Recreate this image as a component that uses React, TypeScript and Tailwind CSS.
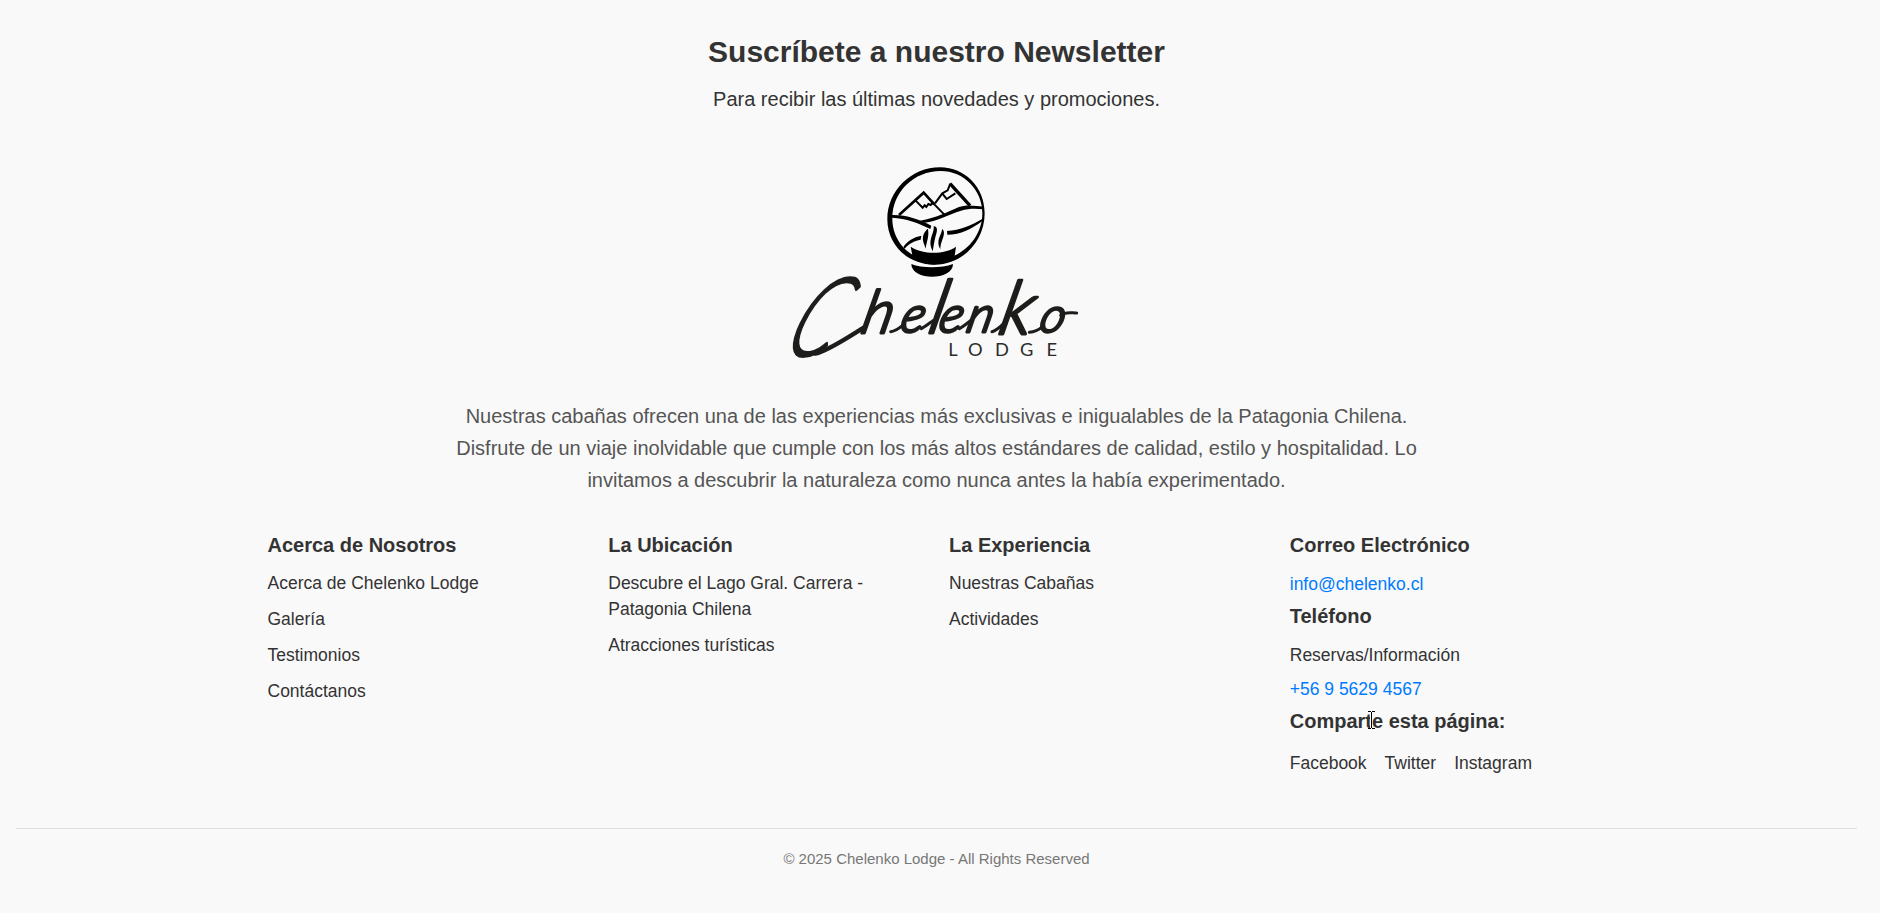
import React from "react";

const linkColumns = [
  {
    title: "Acerca de Nosotros",
    links: ["Acerca de Chelenko Lodge", "Galería", "Testimonios", "Contáctanos"],
  },
  {
    title: "La Ubicación",
    links: ["Descubre el Lago Gral. Carrera - Patagonia Chilena", "Atracciones turísticas"],
  },
  { title: "La Experiencia", links: ["Nuestras Cabañas", "Actividades"] },
];

const socials = ["Facebook", "Twitter", "Instagram"];

function Emblem() {
  return (
    <g>
      <path
        fillRule="evenodd"
        d="M480 52C555 52 614 112 614 190C614 274 548 344 464 344C384 344 322 286 322 208C322 122 394 52 480 52ZM482 63C402 63 337 125 337 206C337 276 392 331 461 331C540 331 607 268 607 190C607 120 552 63 482 63Z"
      />
      <g fill="none" stroke="#000" strokeLinejoin="miter">
        <path strokeWidth="8" d="M357 195L431 128L463 163" />
        <path strokeWidth="6" d="M458 158L493 194" />
        <path strokeWidth="6" d="M407 152L428 173L434 166L439 171L445 162L452 165L461 156" />
        <path strokeWidth="6" d="M465 160L487 130L503 121L511 101" />
        <path strokeWidth="10" d="M510 101L540 134L570 167" />
        <path strokeWidth="6" d="M487 131L500 147L526 130" />
      </g>
      <path d="M336 195C380 194 420 209 454 227L451 237C416 219 378 205 336 203Z" />
      <path d="M420 212C470 204 500 187 535 172C560 162 585 168 610 170L610 178C585 175 565 176 543 182C505 193 475 213 433 218Z" />
      <path d="M501 243C540 241 576 225 608 206L608 212C576 236 542 254 502 254Z" />
      <path d="M370 291C382 272 400 262 424 257L422 269C402 273 386 281 374 296Z" />
      <path d="M442 237C420 260 430 275 437 296C440 272 448 262 444 237Z" />
      <path d="M461 229C476 229 471 247 466 262C462 277 461 290 458 304C448 283 451 270 456 255C460 244 462 237 461 229Z" />
      <path d="M486 237C497 244 490 262 486 272C482 282 481 290 481 298C472 281 475 268 480 257C484 248 486 243 486 237Z" />
      <path d="M392 290C430 314 493 314 528 290L524 318C490 351 430 351 398 321Z" />
      <path d="M394 342C425 355 485 355 519 342C519 393 394 393 394 342Z" />
    </g>
  );
}

function Logo() {
  return (
    <svg
      className="block h-[220px] w-[313px] overflow-visible"
      viewBox="0 0 939 660"
      role="img"
      aria-label="Chelenko Lodge"
    >
      <Emblem />
      <g
        fill="#1d1d1b"
        stroke="#1d1d1b"
        strokeLinejoin="round"
        fontFamily="Lato, 'Liberation Sans', sans-serif"
        fontStyle="italic"
        fontWeight="300"
      >
        <g transform="translate(34 548) skewX(-26) scale(0.67 1)">
          <text x="0" y="69" fontSize="330" strokeWidth="7">C</text>
        </g>
        <g transform="translate(0 548) skewX(-13)">
          <text strokeWidth="8.5">
            <tspan x="238" y="0" fontSize="180">h</tspan>
            <tspan x="356" y="-1" fontSize="150">e</tspan>
            <tspan x="439" y="0" fontSize="222">l</tspan>
            <tspan x="471" y="-1" fontSize="150">e</tspan>
            <tspan x="554" y="-1" fontSize="150">n</tspan>
            <tspan x="651" y="5" fontSize="222">k</tspan>
            <tspan x="773" y="-1" fontSize="145">o</tspan>
          </text>
        </g>
      </g>
      <path
        d="M842 496C856 484 874 489 890 489"
        fill="none"
        stroke="#1d1d1b"
        strokeWidth="9"
        strokeLinecap="round"
      />
      <g fill="none" stroke="#1d1d1b" strokeLinecap="round">
        <path d="M106 611C150 600 212 556 256 530" strokeWidth="13" />
        <path d="M332 545C346 544 356 536 368 526" strokeWidth="9" />
        <path d="M424 536C438 528 448 520 459 512" strokeWidth="9" />
        <path d="M538 536C552 528 562 520 574 510" strokeWidth="9" />
        <path d="M636 545C650 542 662 530 674 518" strokeWidth="9" />
        <path d="M748 547C764 546 776 540 788 530" strokeWidth="9" />
      </g>
      <g transform="translate(505 618) scale(1.12 1)">
        <text
          y="0"
          fill="#2b2b2a"
          fontFamily="Lato, 'Liberation Sans', sans-serif"
          fontSize="49"
        >
          <tspan x="0">L</tspan>
          <tspan x="53">O</tspan>
          <tspan x="125">D</tspan>
          <tspan x="192">G</tspan>
          <tspan x="263">E</tspan>
        </text>
      </g>
    </svg>
  );
}

function ColumnTitle({ children }: { children: React.ReactNode }) {
  return <h4 className="text-[20px] leading-6 font-bold">{children}</h4>;
}

function ContactColumn() {
  return (
    <div>
      <ColumnTitle>Correo Electrónico</ColumnTitle>
      <a className="mt-3.5 block text-[#007bff]">info@chelenko.cl</a>
      <div className="mt-[7px]">
        <ColumnTitle>Teléfono</ColumnTitle>
      </div>
      <p className="mt-3.5">Reservas/Información</p>
      <a className="mt-2 block text-[#007bff]">+56 9 5629 4567</a>
      <div className="relative mt-[7px]">
        <ColumnTitle>Comparte esta página:</ColumnTitle>
        <svg
          className="absolute top-[1px] left-[77px] h-[20px] w-[9px]"
          viewBox="0 0 9 20"
          shapeRendering="crispEdges"
          fill="none"
        >
          <path d="M3.5 2V18" stroke="#fff" />
          <path d="M1 1.5H4M5 1.5H8M1 18.5H4M5 18.5H8M4.5 2V18" stroke="#000" />
        </svg>
      </div>
      <div className="mt-[17px] flex gap-[18px]">
        {socials.map((name) => (
          <a key={name}>{name}</a>
        ))}
      </div>
    </div>
  );
}

export default function App() {
  return (
    <div className="min-h-screen bg-[#f9f9f9] font-['Liberation_Sans',Arial,sans-serif] text-[#333]">
      <footer className="flex w-[1873px] flex-col items-center px-4 pt-[34px]">
        <h2 className="text-[30px] leading-9 font-bold">Suscríbete a nuestro Newsletter</h2>
        <p className="mt-[13px] text-[20px] leading-8">
          Para recibir las últimas novedades y promociones.
        </p>
        <div className="mt-[35px]">
          <Logo />
        </div>
        <p className="mt-[30px] w-[1000px] text-center text-[20px] leading-8 text-[#555]">
          Nuestras cabañas ofrecen una de las experiencias más exclusivas e inigualables de la
          Patagonia Chilena. Disfrute de un viaje inolvidable que cumple con los más altos
          estándares de calidad, estilo y hospitalidad. Lo invitamos a descubrir la naturaleza como
          nunca antes la había experimentado.
        </p>
        <div className="mt-[37px] grid w-[1338px] grid-cols-4 gap-[25px] text-[17.5px] leading-[26px]">
          {linkColumns.map((column) => (
            <div key={column.title}>
              <ColumnTitle>{column.title}</ColumnTitle>
              <ul className="mt-[13px] flex flex-col gap-2.5">
                {column.links.map((link) => (
                  <li key={link}>
                    <a>{link}</a>
                  </li>
                ))}
              </ul>
            </div>
          ))}
          <ContactColumn />
        </div>
        <div className="mt-[52px] w-full border-t border-[#ddd] pt-[19px] text-center text-[15px] leading-[22px] text-[#777]">
          © 2025 Chelenko Lodge - All Rights Reserved
        </div>
      </footer>
    </div>
  );
}
